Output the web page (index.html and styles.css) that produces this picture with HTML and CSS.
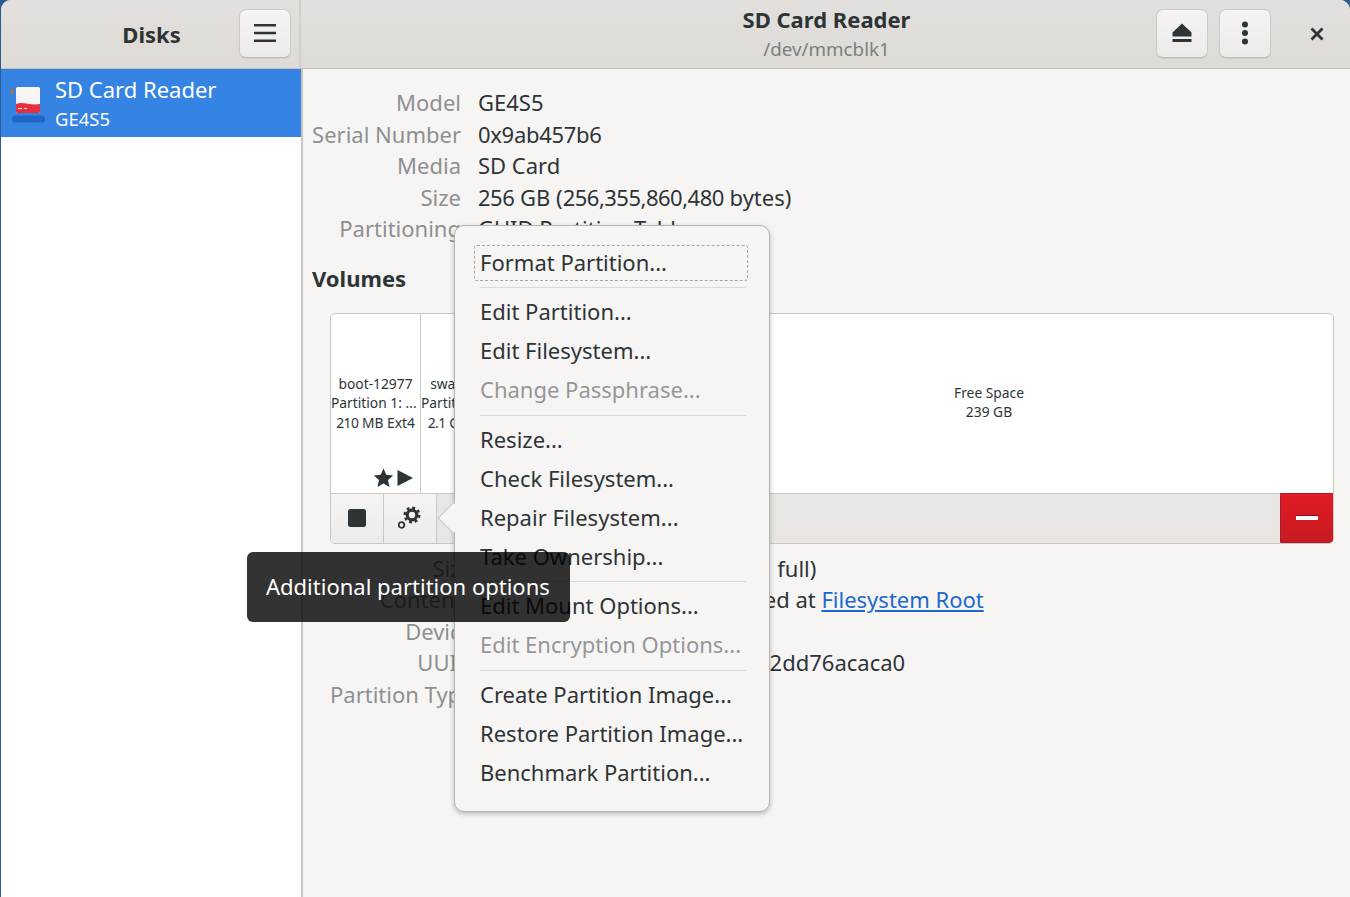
FILE: index.html
```html
<!DOCTYPE html>
<html lang="en">

<head>
    <meta charset="UTF-8">
    <title>Disks</title>
    <link rel="stylesheet" href="styles.css">
</head>

<body>
    <div class="window">
        <div class="headerbar">
            <div class="head-left">
                <div class="head-left-title">Disks</div>
                <button class="head-btn">
                    <svg width="24" height="24" viewBox="0 0 24 24"><path d="M1 3h22v2.600H1zM1 10.700h22v2.600H1zM1 18.400h22V21H1z" fill="#2e3436"/></svg>
                </button>
            </div>
            <div class="head-main">
                <div class="head-titles">
                    <div class="head-title">SD Card Reader</div>
                    <div class="head-sub">/dev/mmcblk1</div>
                </div>
                <div class="head-actions">
                    <button class="head-btn">
                        <svg width="24" height="24" viewBox="0 0 24 24"><path d="M12 2.500 21.500 11.500V15.500H2.500V11.500ZM2.500 18H21.500V21H2.500Z" fill="#2e3436"/></svg>
                    </button>
                    <button class="head-btn">
                        <svg width="24" height="24" viewBox="0 0 24 24"><circle cx="12" cy="3.500" r="3" fill="#2e3436"/><circle cx="12" cy="12" r="3" fill="#2e3436"/><circle cx="12" cy="20.500" r="3" fill="#2e3436"/></svg>
                    </button>
                    <button class="close-btn">
                        <svg width="14" height="14" viewBox="0 0 14 14"><path d="M1.500 1.500 12.500 12.500M12.500 1.500 1.500 12.500" stroke="#2e3436" stroke-width="2.800" fill="none"/></svg>
                    </button>
                </div>
            </div>
        </div>

        <div class="content">
            <div class="sidebar">
                <div class="drive-row">
                    <svg class="drive-icon" width="36" height="40" viewBox="0 0 36 40">
                        <rect x="0" y="4" width="2" height="5" fill="#e66100"/>
                        <rect x="1" y="30.500" width="33" height="7" rx="3" fill="#2068c8"/>
                        <rect x="5" y="2" width="24" height="26" rx="1.500" fill="#f6f5f4"/>
                        <path d="M5 19C12 16 19 21 29 19V26.500A1.500 1.500 0 0 1 27.500 28H6.500A1.500 1.500 0 0 1 5 26.500Z" fill="#e8303c"/>
                        <path d="M7 23h4v1H7zM13 23h3v1h-3z" fill="#fff"/>
                    </svg>
                    <div>
                        <div class="drive-name">SD Card Reader</div>
                        <div class="drive-model">GE4S5</div>
                    </div>
                </div>
            </div>

            <div class="main">
                <div class="info top-info">
                    <div class="lbl">Model</div><div class="val">GE4S5</div>
                    <div class="lbl">Serial Number</div><div class="val"><span class="num-tight">0x9ab457b6</span></div>
                    <div class="lbl">Media</div><div class="val">SD Card</div>
                    <div class="lbl">Size</div><div class="val"><span class="num">256</span> GB (<span class="num">256,355,860,480</span> bytes)</div>
                    <div class="lbl">Partitioning</div><div class="val">GUID Partition Table</div>
                </div>

                <h2 class="volumes-title">Volumes</h2>

                <div class="volumes">
                    <div class="parts">
                        <div class="part part-boot">
                            <div>boot-12977</div>
                            <div class="part-shift">Partition 1: ...</div>
                            <div><span class="num">210</span> MB Ext4</div>
                            <div class="part-marks">
                                <svg width="40" height="20" viewBox="0 0 40 20">
                                    <path d="M9.500 0.500 12.300 6.800 19.200 7.500 14 12.100 15.500 19 9.500 15.500 3.500 19 5 12.100 -0.200 7.500 6.700 6.800Z" fill="#2e3436"/>
                                    <path d="M23.500 2 39 10 23.500 18Z" fill="#2e3436"/>
                                </svg>
                            </div>
                        </div>
                        <div class="part part-swap">
                            <div>swap</div>
                            <div>Partition 2: ...</div>
                            <div class="part-shift-right"><span class="num">2.1</span> GB</div>
                        </div>
                        <div class="part part-root">
                            <div>root</div>
                            <div>Partition 3: ...</div>
                            <div>15 GB Ext4</div>
                        </div>
                        <div class="part part-free">
                            <div>Free Space</div>
                            <div>239 GB</div>
                        </div>
                    </div>
                    <div class="vol-toolbar">
                        <button class="tool-btn">
                            <svg width="18" height="18" viewBox="0 0 18 18"><rect width="18" height="18" rx="2.500" fill="#2e3436"/></svg>
                        </button>
                        <button class="tool-btn">
                            <svg width="24" height="24" viewBox="0 0 24 24">
                                <circle cx="14" cy="9" r="4.800" fill="none" stroke="#2e3436" stroke-width="3.200"/>
                                <circle cx="14" cy="9" r="7.300" fill="none" stroke="#2e3436" stroke-width="2.400" stroke-dasharray="2.900 2.833"/>
                                <circle cx="3.500" cy="19" r="2.800" fill="none" stroke="#2e3436" stroke-width="1.800"/>
                            </svg>
                        </button>
                        <div class="tool-space"></div>
                        <button class="tool-delete">
                            <span class="minus"></span>
                        </button>
                    </div>
                </div>

                <div class="info vol-info">
                    <div class="lbl">Size</div><div class="val val-size">210 MB — 23 MB free (<span class="num">89</span>% full)</div>
                    <div class="lbl">Contents</div><div class="val">Ext4 (version 1.0) — Mounted at <a href="#">Filesystem Root</a></div>
                    <div class="lbl">Device</div><div class="val">/dev/mmcblk1p1</div>
                    <div class="lbl">UUID</div><div class="val"><span class="num-tight">8f2a</span>41c6-0b7e-4c15-a9d3-52dd76acaca0</div>
                    <div class="lbl">Partition Type</div><div class="val">Linux Filesystem</div>
                </div>
            </div>
        </div>

        <!-- partition menu, sits over the page -->
        <div class="popover">
            <div class="pop-arrow"></div>
            <div class="item item-focus">Format Partition...</div>
            <div class="sep sep-wide"></div>
            <div class="item">Edit Partition...</div>
            <div class="item">Edit Filesystem...</div>
            <div class="item disabled">Change Passphrase...</div>
            <div class="sep sep-wide"></div>
            <div class="item">Resize...</div>
            <div class="item">Check Filesystem...</div>
            <div class="item">Repair Filesystem...</div>
            <div class="item">Take Ownership...</div>
            <div class="sep"></div>
            <div class="item">Edit Mount Options...</div>
            <div class="item disabled">Edit Encryption Options...</div>
            <div class="sep sep-wide"></div>
            <div class="item">Create Partition Image...</div>
            <div class="item">Restore Partition Image...</div>
            <div class="item">Benchmark Partition...</div>
        </div>

        <div class="tooltip">Additional partition options</div>
    </div>
</body>

</html>
```

FILE: styles.css
```css
* {
    box-sizing: border-box;
}

body {
    font-family: "Noto Sans", sans-serif;
    font-size: 22px;
    color: #2e3436;
    background-color: #2b5c8f;
    margin: 0;
    padding: 0;
    height: 100vh;
    overflow: hidden;
}

button {
    font: inherit;
    padding: 0;
    cursor: pointer;
}

.window {
    position: relative;
    height: 897px;
    margin-left: 1px;
    background-color: #f6f5f4;
    border-radius: 10px 10px 0 0;
    overflow: hidden;
    display: flex;
    flex-direction: column;
}

/* header */
.headerbar {
    height: 69px;
    flex-shrink: 0;
    display: flex;
    background: linear-gradient(#e3dfdc, #dedbd7);
    border-bottom: 1px solid #c6c0ba;
}

.head-left {
    width: 300px;
    flex-shrink: 0;
    display: flex;
    align-items: center;
    padding-right: 8px;
    border-right: 2px solid #d3cfca;
}

.head-left-title {
    flex: 1;
    text-align: center;
    font-weight: 700;
    padding-left: 63px;
}

.head-btn {
    width: 52px;
    height: 49px;
    margin-top: -2px;
    display: flex;
    align-items: center;
    justify-content: center;
    background: linear-gradient(#f5f4f3, #ecebe9);
    border: 1px solid #cfc9c3;
    border-bottom-color: #bfb8b1;
    border-radius: 7px;
    box-shadow: 0 1px 1px rgba(0, 0, 0, 0.07);
}

.head-main {
    flex: 1;
    display: flex;
    align-items: center;
    padding-left: 2px;
    position: relative;
}

.head-titles {
    flex: 0 0 1047px;
    text-align: center;
}

.head-title {
    font-weight: 700;
    line-height: 30px;
}

.head-sub {
    font-size: 18.800px;
    line-height: 30px;
    color: #7b7f80;
}

.head-actions {
    position: absolute;
    right: 0;
    top: 0;
    height: 68px;
    display: flex;
    align-items: center;
    gap: 11px;
}

.close-btn {
    width: 66px;
    height: 49px;
    margin-left: 2px;
    display: flex;
    align-items: center;
    justify-content: center;
    background: none;
    border: none;
}

/* body */
.content {
    flex: 1;
    display: flex;
    min-height: 0;
}

.sidebar {
    width: 300px;
    flex-shrink: 0;
    background-color: #fff;
    border-right: 2px solid #c9c5c0;
    box-sizing: content-box;
}

.drive-row {
    height: 68px;
    background-color: #3584e4;
    color: #fff;
    display: flex;
    align-items: center;
    gap: 8px;
    padding-left: 10px;
}

.drive-icon {
    flex-shrink: 0;
    margin-top: 3px;
}

.drive-name {
    line-height: 29px;
    margin-top: 2px;
}

.drive-model {
    font-size: 18.500px;
    line-height: 29px;
}

.main {
    flex: 1;
    padding: 18px 16px 0 8px;
    min-width: 0;
}

.info {
    display: grid;
    line-height: 31.500px;
    column-gap: 18px;
}

.top-info {
    grid-template-columns: 150px 1fr;
    column-gap: 17px;
}

.vol-info {
    grid-template-columns: 143px 1fr;
    column-gap: 13px;
    padding-left: 19px;
    margin-top: 9px;
}

.lbl {
    text-align: right;
    color: #8d9091;
    white-space: nowrap;
}

.val {
    white-space: nowrap;
}

.val-size {
    word-spacing: 1.100px;
}

.val a {
    color: #1b6acb;
}

/* digits are a bit narrower in the reference font */
.num {
    letter-spacing: -0.500px;
}

.num-tight {
    letter-spacing: -0.300px;
}

.volumes-title {
    font-size: 22px;
    font-weight: 700;
    line-height: 30px;
    margin: 18px 0 20px 1px;
}

/* volume graph */
.volumes {
    margin-left: 19px;
    height: 231px;
    border: 1px solid #cdc7c2;
    border-radius: 5px;
    display: flex;
    flex-direction: column;
    background-color: #fff;
    overflow: hidden;
}

.parts {
    flex: 1;
    display: flex;
    font-size: 13.800px;
    line-height: 19.500px;
    text-align: center;
    min-height: 0;
}

.part {
    position: relative;
    display: flex;
    flex-direction: column;
    justify-content: center;
    border-right: 1px solid #cdc7c2;
    white-space: nowrap;
    overflow: hidden;
}

.part-boot {
    width: 90px;
}

.part-shift {
    margin-right: 6px;
}

.part-shift-right {
    margin-left: 2px;
}

.part-swap {
    width: 53px;
}

.part-root {
    width: 171px;
}

.part-free {
    flex: 1;
    border-right: none;
    padding-bottom: 2px;
}

.part-marks {
    position: absolute;
    right: 6px;
    bottom: 5px;
    line-height: 0;
}

.vol-toolbar {
    height: 50px;
    flex-shrink: 0;
    display: flex;
    background-color: #e8e5e2;
    border-top: 1px solid #cdc7c2;
}

.tool-btn {
    width: 53px;
    display: flex;
    align-items: center;
    justify-content: center;
    background: linear-gradient(#f5f4f3, #ecebe9);
    border: none;
    border-right: 1px solid #cdc7c2;
}

.tool-space {
    flex: 1;
}

.tool-delete {
    width: 54px;
    margin: -1px -1px 0 0;
    display: flex;
    align-items: center;
    justify-content: center;
    background: linear-gradient(#e01b24, #c91a22);
    border: 1px solid #a51d2d;
    border-radius: 0 0 5px 0;
}

.minus {
    width: 22px;
    height: 4px;
    background-color: #fff;
    box-shadow: 0 -1px 0 #7a0f15;
}

/* menu popover */
.popover {
    position: absolute;
    left: 453px;
    top: 225px;
    width: 316px;
    height: 587px;
    padding: 17px 21px 0 19px;
    background-color: #f6f5f4;
    border: 1px solid #b9b4ae;
    border-radius: 10px;
    box-shadow: 0 2px 5px rgba(0, 0, 0, 0.25);
}

.pop-arrow {
    position: absolute;
    left: -13.500px;
    top: 281px;
    width: 22px;
    height: 22px;
    background-color: #f6f5f4;
    border-left: 1px solid #c9c4be;
    border-bottom: 1px solid #c9c4be;
    transform: rotate(45deg);
}

.item {
    position: relative;
    height: 39px;
    line-height: 39px;
    padding-left: 6px;
    white-space: nowrap;
}

.item-focus {
    margin-top: 2px;
    height: 36px;
    line-height: 32px;
    padding-left: 5px;
    border: 1px dashed #a9a7a4;
    border-radius: 3px;
}

.disabled {
    color: #94979a;
}

.sep {
    height: 1px;
    margin: 5px 2px 4px 6px;
    background-color: #dcd9d6;
}

.sep-wide {
    margin-top: 6px;
}

.tooltip {
    position: absolute;
    left: 246px;
    top: 552px;
    width: 323px;
    height: 70px;
    padding: 0 19px;
    line-height: 69px;
    color: #fff;
    white-space: nowrap;
    background-color: rgba(0, 0, 0, 0.8);
    border-radius: 6px;
}
```
